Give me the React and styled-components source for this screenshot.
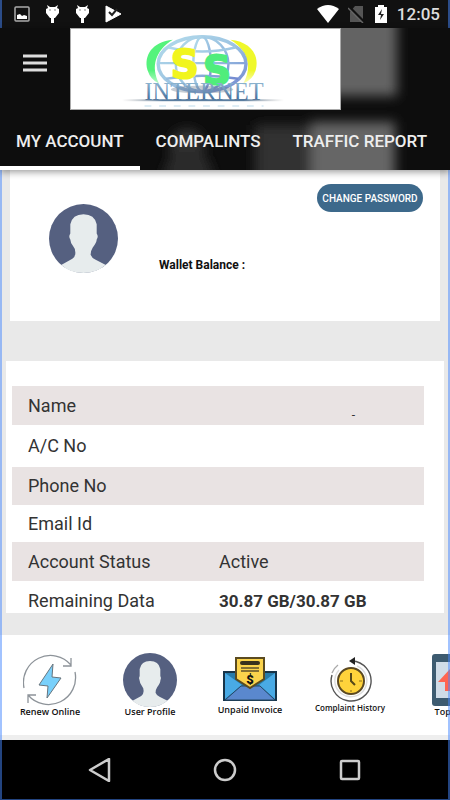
import React from "react";
import styled, { createGlobalStyle } from "styled-components";

const GlobalStyle = createGlobalStyle`
  *, *::before, *::after { box-sizing: border-box; }
  body { margin: 0; background: #e9e9e9; font-family: Roboto, "Liberation Sans", sans-serif; }
  button { font-family: inherit; border: 0; padding: 0; background: none; cursor: pointer; }
`;

const Shell = styled.div`
  position: relative;
  display: flex;
  flex-direction: column;
  min-height: 100vh;
  overflow: hidden;
  &::after {
    content: "";
    position: absolute;
    inset: 0;
    border: solid rgba(70, 135, 255, 0.5);
    border-width: 0 2px 1px;
    pointer-events: none;
  }
`;

const StatusBar = styled.div`
  display: flex;
  align-items: center;
  justify-content: space-between;
  height: 28px;
  padding: 0 10px 0 14px;
  background: #111;
  color: #eee;
`;

const StatusGroup = styled.div`
  display: flex;
  align-items: center;
  gap: ${(p) => p.$gap}px;
`;

const Clock = styled.time`
  font-size: 17px;
  line-height: 24px;
  font-weight: 500;
  color: #ddd;
`;

const Header = styled.header`
  position: relative;
  background: #0d0d0d;
  box-shadow: 0 2px 7px rgba(0, 0, 0, 0.4);
  z-index: 1;
`;

const Backdrop = styled.svg`
  position: absolute;
  inset: 0;
  width: 100%;
  height: 100%;
`;

const Brand = styled.div`
  position: relative;
  display: flex;
  height: 82px;
`;

const MenuButton = styled.button`
  flex: 0 0 70px;
  display: flex;
  justify-content: center;
  padding-top: 24px;
`;

const Logo = styled.svg`
  flex: 0 1 271px;
  min-width: 0;
  height: 82px;
  background: #fff;
  border: 1px solid #aaa;
`;

const Tabs = styled.nav`
  position: relative;
  display: flex;
  height: 60px;
`;

const Tab = styled.button`
  flex: none;
  padding: 6px 16px 0;
  border-bottom: 4px solid ${(p) => (p.$active ? "#fff" : "transparent")};
  color: #eee;
  font-size: 17px;
  font-weight: 500;
  line-height: 24px;
  white-space: nowrap;
`;

const Content = styled.main`
  flex: 1;
  padding-bottom: 22px;
`;

const ProfileCard = styled.section`
  display: flex;
  align-items: flex-start;
  min-height: 151px;
  margin: 0 10px;
  padding: 14px 17px 0 39px;
  background: #fff;
`;

const Avatar = styled.svg`
  flex: none;
  width: ${(p) => p.$size}px;
  height: ${(p) => p.$size}px;
  margin-top: ${(p) => p.$top || 0}px;
`;

const Wallet = styled.p`
  flex: 1;
  margin: 73px 0 0 41px;
  font-size: 12px;
  line-height: 16px;
  font-weight: 700;
  color: #111;
  white-space: nowrap;
`;

const PasswordButton = styled.button`
  flex: none;
  width: 106px;
  height: 28px;
  border-radius: 14px;
  background: #3d698b;
  color: #fff;
  font-size: 10px;
  font-weight: 500;
  white-space: nowrap;
`;

const DetailsCard = styled.section`
  margin: 40px 6px 0;
  padding: 25px 20px 0 6px;
  background: #fff;
`;

const Details = styled.table`
  width: 100%;
  border-collapse: collapse;
  table-layout: fixed;
  font-size: 18px;
  line-height: 24px;
  color: #333;
`;

const Row = styled.tr`
  height: ${(p) => p.$height}px;
  background: ${(p) => (p.$shaded ? "#e9e3e3" : "#fff")};
  &:last-child > * {
    padding-top: 8px;
  }
`;

const Label = styled.th`
  width: 207px;
  padding: 0 0 0 16px;
  text-align: left;
  font-weight: 400;
`;

const Value = styled.td`
  padding: 0;
  font-size: ${(p) => (p.$bold ? 17 : 18)}px;
  font-weight: ${(p) => (p.$bold ? 700 : 400)};
`;

const MaskedValue = styled.td`
  padding: 0 69px 4px 0;
  text-align: right;
  vertical-align: bottom;
  font-size: 12px;
  line-height: 12px;
`;

const Actions = styled.nav`
  display: flex;
  height: 100px;
  padding-top: 18px;
  background: #fff;
  overflow: hidden;
`;

const Action = styled.button`
  flex: 0 0 100px;
  display: flex;
  flex-direction: column;
  align-items: center;
  color: #111;
  font-family: "Open Sans", "Noto Sans", sans-serif;
  font-size: ${(p) => p.$font || 9}px;
  font-weight: 600;
  line-height: 10px;
  white-space: nowrap;
`;

const ActionIcon = styled.svg`
  flex: none;
  width: 54px;
  height: ${(p) => p.$height || 54}px;
`;

const SystemNav = styled.nav`
  display: flex;
  justify-content: center;
  gap: 65px;
  height: 65px;
  border-top: 5px solid #eee;
  background: #000;
`;

const SystemButton = styled.button`
  flex: none;
  width: 60px;
  display: grid;
  place-items: center;
`;

function Person({ size, top }) {
  return (
    <Avatar viewBox="0 0 68 68" $size={size} $top={top} aria-hidden="true">
      <circle cx="34" cy="34" r="34" fill="#556080" />
      <path
        fill="#e7eced"
        d="M12 60 L23 54 Q26 52 26 48 Q26 44 24 42 Q21 38 21 35 Q19 32 21 29 V20 Q23 10 34 10 Q45 10 47 20 V29 Q49 32 47 35 Q47 38 43 43 Q41 46 41 50 Q42 53 46 55 L56 60 Q46 68 34 68 Q21 68 12 60Z"
      />
    </Avatar>
  );
}

function Debug() {
  return (
    <svg width="15" height="20" viewBox="0 0 15 20" fill="#fff" aria-hidden="true">
      <path d="M2 1 L5 3 H10 L13 1 L12 4 L14 5 V9 L10 14 H9 V19 H6 V14 H5 L1 9 V5 L3 4Z" />
      <circle cx="5" cy="6" r="0.8" fill="#777" />
      <circle cx="10" cy="6" r="0.8" fill="#777" />
    </svg>
  );
}

function StatusIcons() {
  return (
    <StatusGroup $gap={15}>
      <svg width="16" height="16" viewBox="0 0 16 16" aria-hidden="true">
        <rect x="1" y="1" width="14" height="14" rx="1" fill="none" stroke="#aaa" strokeWidth="1.5" />
        <path d="M3 13 V9 L6 8 L8 10 L10 9 L13 10 V13Z" fill="#fff" />
      </svg>
      <Debug />
      <Debug />
      <svg width="17" height="18" viewBox="0 0 17 18" aria-hidden="true">
        <path d="M1 1 L16 9 L1 17Z" fill="#fff" stroke="#fff" strokeLinejoin="round" />
        <path d="M4 7 L7 10 L12 4" fill="none" stroke="#222" strokeWidth="2" />
      </svg>
    </StatusGroup>
  );
}

function BrandLogo() {
  return (
    <Logo viewBox="70 28 271 82" role="img" aria-label="SS Internet">
      <defs>
        <linearGradient id="globe" x1="0" y1="0" x2="1" y2="1">
          <stop offset="0" stopColor="#b4dcec" />
          <stop offset="0.5" stopColor="#9cc4e2" />
          <stop offset="1" stopColor="#6f83cf" />
        </linearGradient>
        <linearGradient id="letters" x1="0" y1="0" x2="0" y2="1">
          <stop offset="0" stopColor="#9fc6dd" />
          <stop offset="1" stopColor="#315a8d" />
        </linearGradient>
        <linearGradient id="line">
          <stop offset="0" stopColor="#999" stopOpacity="0" />
          <stop offset="0.25" stopColor="#5b7ea0" />
          <stop offset="0.75" stopColor="#5b7ea0" />
          <stop offset="1" stopColor="#999" stopOpacity="0" />
        </linearGradient>
        <linearGradient id="greenFade" x1="0" y1="0" x2="0" y2="1">
          <stop offset="0.7" stopColor="#55f37c" />
          <stop offset="1" stopColor="#55f37c" stopOpacity="0.4" />
        </linearGradient>
        <linearGradient id="yellowFade" x1="0" y1="0" x2="0" y2="1">
          <stop offset="0.7" stopColor="#eff82b" />
          <stop offset="1" stopColor="#eff82b" stopOpacity="0.3" />
        </linearGradient>
      </defs>
      <path d="M172 39 C151 41 142 55 146 70 Q149 80 158 84 C149 67 154 50 172 39Z" fill="url(#greenFade)" />
      <path d="M231 39 C252 41 261 55 257 70 Q254 80 244 84 C254 67 249 50 231 39Z" fill="url(#yellowFade)" />
      <g fill="none" stroke="url(#globe)" strokeWidth="2.5">
        <ellipse cx="202" cy="64" rx="45" ry="28" strokeWidth="3.5" />
        <ellipse cx="202" cy="64" rx="27" ry="28" />
        <ellipse cx="202" cy="64" rx="9" ry="28" />
        <path d="M168 47 Q202 55 236 47 M157 63 H247 M165 79 Q202 73 239 79" />
      </g>
      <ellipse cx="202" cy="90" rx="32" ry="4" fill="#5d6c82" opacity="0.35" />
      <text x="170" y="78" fontFamily="DejaVu Sans, sans-serif" fontWeight="700" fontSize="40" strokeWidth="2" strokeLinejoin="round">
        <tspan fill="#f1f51e" stroke="#f1f51e">S</tspan>
        <tspan x="203" y="84" fill="#50ed7c" stroke="#50ed7c">S</tspan>
      </text>
      <text x="204" y="101" textAnchor="middle" fontFamily="Liberation Serif, serif" fontSize="25" fill="url(#letters)">
        INTERNET
      </text>
      <rect x="120" y="100" width="166" height="2" fill="url(#line)" />
      <path d="M143 107 H265" stroke="#c9e2ef" strokeWidth="2" strokeDasharray="7 8" opacity="0.6" />
    </Logo>
  );
}

const rows = [
  { label: "Name", height: 39, masked: "-" },
  { label: "A/C No", height: 42 },
  { label: "Phone No", height: 38 },
  { label: "Email Id", height: 37 },
  { label: "Account Status", height: 39, value: "Active" },
  { label: "Remaining Data", height: 32, value: "30.87 GB/30.87 GB", bold: true },
];

const tabs = ["MY ACCOUNT", "COMPALINTS", "TRAFFIC REPORT"];

export default function App() {
  return (
    <Shell>
      <GlobalStyle />
      <StatusBar>
        <StatusIcons />
        <StatusGroup $gap={9}>
          <svg width="22" height="18" viewBox="0 0 22 18" aria-hidden="true">
            <path d="M0 4 Q11 -4 22 4 L11 18Z" fill="#fff" />
          </svg>
          <svg width="17" height="18" viewBox="0 0 17 18" aria-hidden="true">
            <path d="M2 17 V7 L7 1 H15 V17Z" fill="#555" />
            <path d="M1 2 L16 17" stroke="#111" strokeWidth="3" />
            <path d="M0 3 L15 18" stroke="#666" strokeWidth="1.5" />
          </svg>
          <svg width="14" height="20" viewBox="0 0 14 20" aria-hidden="true">
            <path d="M1 3 H4 V1 H10 V3 H13 V19 H1Z" fill="#fff" />
            <path d="M8 5 L4 11 H7 L6 16 L10 10 H7Z" fill="#222" />
          </svg>
          <Clock>12:05</Clock>
        </StatusGroup>
      </StatusBar>
      <Header>
        <Backdrop viewBox="0 28 450 142" preserveAspectRatio="none" aria-hidden="true">
          <defs>
            <filter id="soft" x="-50%" y="-50%" width="200%" height="200%">
              <feGaussianBlur stdDeviation="6" />
            </filter>
          </defs>
          <g filter="url(#soft)">
            <rect x="325" y="10" width="72" height="86" fill="#646464" />
            <rect x="311" y="122" width="84" height="65" fill="#666" />
            <rect x="255" y="125" width="56" height="60" fill="#303030" />
            <circle cx="187" cy="146" r="17" fill="#363636" />
            <path d="M162 180 Q170 145 187 145 Q206 145 215 180Z" fill="#2c2c2c" />
          </g>
        </Backdrop>
        <Brand>
          <MenuButton aria-label="Open menu">
            <svg width="24" height="20" viewBox="0 0 24 20" aria-hidden="true">
              <path d="M0 4 H24 M0 11 H24 M0 18 H24" stroke="#ddd" strokeWidth="3" />
            </svg>
          </MenuButton>
          <BrandLogo />
        </Brand>
        <Tabs aria-label="Sections">
          {tabs.map((name, i) => (
            <Tab key={name} $active={i === 0}>{name}</Tab>
          ))}
        </Tabs>
      </Header>
      <Content>
        <ProfileCard>
          <Person size={69} top={20} />
          <Wallet>Wallet Balance :</Wallet>
          <PasswordButton>CHANGE PASSWORD</PasswordButton>
        </ProfileCard>
        <DetailsCard>
          <Details>
            <tbody>
              {rows.map((r, i) => (
                <Row key={r.label} $height={r.height} $shaded={i % 2 === 0}>
                  <Label scope="row">{r.label}</Label>
                  {r.masked ? <MaskedValue>{r.masked}</MaskedValue> : <Value $bold={r.bold}>{r.value}</Value>}
                </Row>
              ))}
            </tbody>
          </Details>
        </DetailsCard>
      </Content>
      <Actions aria-label="Quick actions">
        <Action>
          <ActionIcon viewBox="0 0 54 54" aria-hidden="true">
            <g fill="none" stroke="#8d9399" strokeWidth="1.3">
              <path d="M1 35 A27 27 0 0 1 48 12 M48 5 V13 H40 M52 19 A27 27 0 0 1 5 42 M5 50 V42 H13" />
            </g>
            <path d="M30 11 L16 32 L25 33 L24 45 L38 25 L29 24Z" fill="#79d0fb" stroke="#67747d" strokeLinejoin="round" />
          </ActionIcon>
          Renew Online
        </Action>
        <Action>
          <Person size={54} />
          User Profile
        </Action>
        <Action>
          <ActionIcon viewBox="0 0 54 52" $height={52} aria-hidden="true">
            <path d="M1 19 H53 V47 H1Z" fill="#277baa" stroke="#173449" strokeWidth="2" />
            <path d="M2 20 L19 32 L2 46Z M52 20 L36 32 L52 46Z" fill="#49aae5" />
            <path d="M2 47 L18 33 H37 L52 47Z" fill="#5a88ce" stroke="#244865" />
            <path d="M13 5 H41 V26 L27 35 L13 26Z" fill="#fbd34c" stroke="#5b4b20" strokeWidth="2" />
            <rect x="17" y="8" width="20" height="4" rx="2" fill="#39321e" />
            <path d="M18 15 H36 M18 18 H36" stroke="#5d502a" strokeWidth="1.4" />
            <text x="27" y="31" textAnchor="middle" fontFamily="Roboto" fontWeight="900" fontSize="13" fill="#111">$</text>
          </ActionIcon>
          Unpaid Invoice
        </Action>
        <Action $font={8}>
          <ActionIcon viewBox="0 0 54 50" $height={50} aria-hidden="true">
            <g fill="none" stroke="#555" strokeWidth="1.4">
              <path d="M9 22 A20 20 0 1 0 29 8" />
              <path d="M9 20 Q11 15 15 12" stroke="#aaa" />
              <path d="M16 17 A16 16 0 1 0 34 13" stroke="#ddd" />
            </g>
            <path d="M26 8 L32 4 V12Z" fill="#222" />
            <circle cx="28" cy="28" r="13" fill="#ffd33b" stroke="#5b4921" strokeWidth="2" />
            <path d="M28 20 V28 L32 32" fill="none" stroke="#564818" strokeWidth="2" />
            <path d="M17 28 H20 M36 28 H39 M28 37 V39" stroke="#8b6e1d" />
          </ActionIcon>
          Complaint History
        </Action>
        <Action>
          <ActionIcon viewBox="0 0 54 54" aria-hidden="true">
            <rect x="9" y="1" width="36" height="52" rx="3" fill="#3d5b70" />
            <rect x="13" y="9" width="28" height="36" fill="#d0dce7" />
            <path d="M27 16 L40 29 H33 V38 H22 V29 H15Z" fill="#ff6550" />
          </ActionIcon>
          Top Up
        </Action>
      </Actions>
      <SystemNav aria-label="System navigation">
        <SystemButton aria-label="Back">
          <svg width="24" height="24" viewBox="0 0 24 24" fill="none" stroke="#ccc" strokeWidth="2.5" strokeLinejoin="round">
            <path d="M21 1 V23 L2 12Z" />
          </svg>
        </SystemButton>
        <SystemButton aria-label="Home">
          <svg width="24" height="24" viewBox="0 0 24 24" fill="none" stroke="#ccc" strokeWidth="2.5">
            <circle cx="12" cy="12" r="10" />
          </svg>
        </SystemButton>
        <SystemButton aria-label="Recent apps">
          <svg width="24" height="24" viewBox="0 0 24 24" fill="none" stroke="#ccc" strokeWidth="2.5">
            <rect x="3" y="3" width="18" height="18" rx="1" />
          </svg>
        </SystemButton>
      </SystemNav>
    </Shell>
  );
}
